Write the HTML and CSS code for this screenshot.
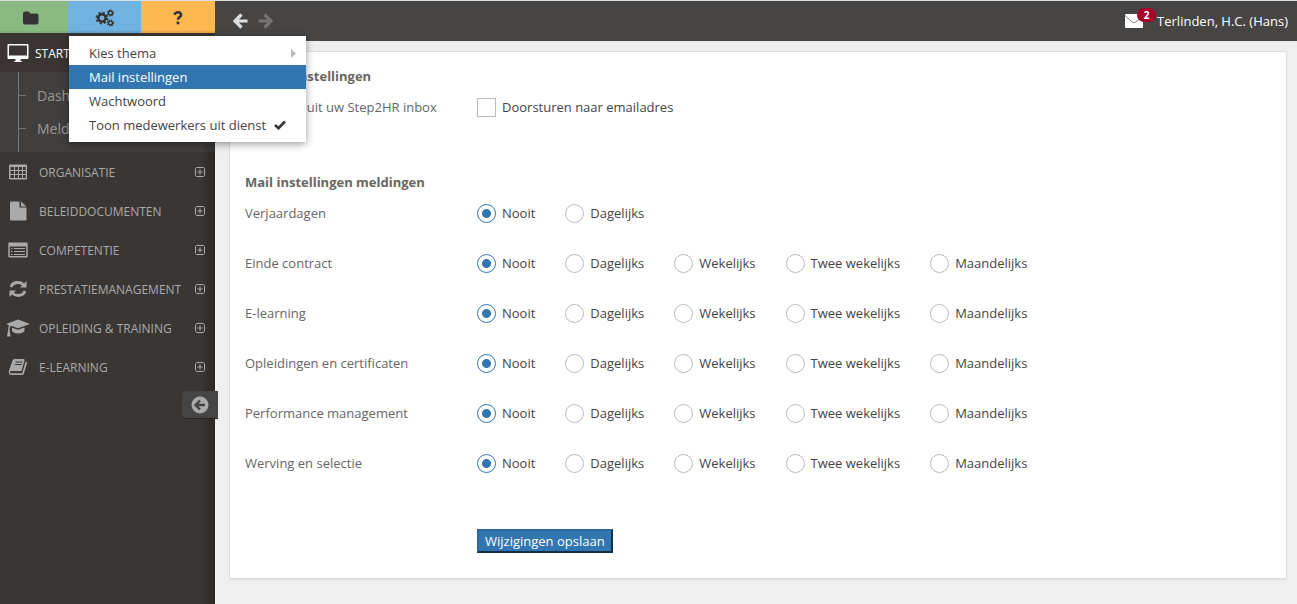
FILE: index.html
```html
<!DOCTYPE html>
<html lang="nl">
<head>
<meta charset="utf-8">
<title>Mail instellingen</title>
<link rel="stylesheet" href="styles.css">
</head>
<body>
<div class="app">
  <aside class="sidebar">
    <div class="quick">
      <button class="quick-btn green" aria-label="Map"><svg width="18" height="14" viewBox="0 0 18 14"><path d="M1 2.500Q1 .5 3 .5H6Q8 .5 8 2.500H14.500Q16.500 2.500 16.500 4.500V11.500Q16.500 13.500 14.500 13.500H3Q1 13.500 1 11.500Z"/></svg></button>
      <button class="quick-btn blue" aria-label="Instellingen"><svg width="20" height="18" viewBox="0 0 20 18"><g fill="none" stroke="#333"><circle cx="7" cy="9" r="3.700" stroke-width="2.600"/><circle cx="7" cy="9" r="5.500" stroke-width="1.800" stroke-dasharray="2.160 2.160"/><circle cx="15.500" cy="4" r="2" stroke-width="1.400"/><circle cx="15.500" cy="4" r="3" stroke-width="1.200" stroke-dasharray="1.180 1.180"/><circle cx="15.500" cy="14" r="2" stroke-width="1.400"/><circle cx="15.500" cy="14" r="3" stroke-width="1.200" stroke-dasharray="1.180 1.180"/></g></svg></button>
      <button class="quick-btn orange" aria-label="Help"><svg width="10" height="14" viewBox="0 0 10 14"><path d="M1.200 3.600Q2.700 1.300 5 1.300Q8 1.300 8 3.900Q8 5.300 6.500 6.200Q5 7 5 8.800" fill="none" stroke="#333" stroke-width="2.600"/><path d="M3.600 10.500H6.400V13.300H3.600Z"/></svg></button>
    </div>
    <nav>
      <a class="nav-item start" href="#"><svg class="nav-icon wide" viewBox="0 0 22 20"><path fill-rule="evenodd" d="M1.500 1H20.500Q21.500 1 21.500 2V15Q21.500 16 20.500 16H13.500V17.500L15 18.500V19H7V18.500L8.500 17.500V16H1.500Q.5 16 .5 15V2Q.5 1 1.500 1ZM2 2.500V12.500H20V2.500Z"/></svg><span>START</span></a>
      <ul class="sub">
        <li><a href="#">Dashboard</a></li>
        <li><a href="#">Meldingen</a></li>
      </ul>
      <a class="nav-item" href="#"><svg class="nav-icon" viewBox="0 0 20 20"><path fill-rule="evenodd" d="M2 2.500H18Q19 2.500 19 3.500V16.500Q19 17.500 18 17.500H2Q1 17.500 1 16.500V3.500Q1 2.500 2 2.500ZM2.500 5V8H6V5ZM7 5V8H10V5ZM11 5V8H14V5ZM15 5V8H17.700V5ZM2.500 9V12H6V9ZM7 9V12H10V9ZM11 9V12H14V9ZM15 9V12H17.700V9ZM2.500 13V16H6V13ZM7 13V16H10V13ZM11 13V16H14V13ZM15 13V16H17.700V13Z"/></svg><span>ORGANISATIE</span><svg class="plus" viewBox="0 0 10 10"><path d="M1.500.5H8.500L9.500 1.500V8.500L8.500 9.500H1.500L.5 8.500V1.500ZM5 2.500V7.500M2.500 5H7.500"/></svg></a>
      <a class="nav-item" href="#"><svg class="nav-icon" viewBox="0 0 20 20"><path d="M3 .5H11.500V6.500H18.500V18.500Q18.500 19.500 17.500 19.500H3Q2 19.500 2 18.500V1.500Q2 .5 3 .5ZM13 .5L18.500 5.500H13Z"/></svg><span>BELEIDDOCUMENTEN</span><svg class="plus" viewBox="0 0 10 10"><path d="M1.500.5H8.500L9.500 1.500V8.500L8.500 9.500H1.500L.5 8.500V1.500ZM5 2.500V7.500M2.500 5H7.500"/></svg></a>
      <a class="nav-item" href="#"><svg class="nav-icon" viewBox="0 0 20 20"><path fill-rule="evenodd" d="M1.500 2.500H18.500Q19.700 2.500 19.700 3.700V16.300Q19.700 17.500 18.500 17.500H1.500Q.3 17.500 .3 16.300V3.700Q.3 2.500 1.500 2.500ZM1.800 6.500V16H18.200V6.500Z"/><path d="M3 8.500H4.500M6 8.500H17M3 11.500H4.500M6 11.500H17M3 14.500H4.500M6 14.500H17" stroke="#aaa"/></svg><span>COMPETENTIE</span><svg class="plus" viewBox="0 0 10 10"><path d="M1.500.5H8.500L9.500 1.500V8.500L8.500 9.500H1.500L.5 8.500V1.500ZM5 2.500V7.500M2.500 5H7.500"/></svg></a>
      <a class="nav-item" href="#"><svg class="nav-icon" viewBox="0 0 20 20"><path fill="none" stroke="#aaa" stroke-width="2.800" d="M3 8Q4.500 3.500 10 3.500Q13.500 3.500 15.500 6M17 12Q15.500 16.500 10 16.500Q6.500 16.500 4.500 14"/><path d="M18.500 2V8.500H12ZM1.500 18V11.500H8Z"/></svg><span>PRESTATIEMANAGEMENT</span><svg class="plus" viewBox="0 0 10 10"><path d="M1.500.5H8.500L9.500 1.500V8.500L8.500 9.500H1.500L.5 8.500V1.500ZM5 2.500V7.500M2.500 5H7.500"/></svg></a>
      <a class="nav-item" href="#"><svg class="nav-icon wide" viewBox="0 0 24 20"><path d="M12 1.500L24 6L12 10.200L5 7.800Q3.500 9 3.500 11.500L4.500 18.500H1L2.200 11.500Q2.200 9 3 7.200L0 6ZM6 9.700L12 11.800L18.500 9.500V13Q16.500 15.500 12 15.500Q8 15.500 6 13Z"/></svg><span>OPLEIDING &amp; TRAINING</span><svg class="plus" viewBox="0 0 10 10"><path d="M1.500.5H8.500L9.500 1.500V8.500L8.500 9.500H1.500L.5 8.500V1.500ZM5 2.500V7.500M2.500 5H7.500"/></svg></a>
      <a class="nav-item" href="#"><svg class="nav-icon" viewBox="0 0 20 20"><path d="M6.500 2H15.500Q17 2 16.500 3.500L13.500 14H3Q2 14 2 15Q2 16.200 3.500 16.200H14.200L17.700 4.500Q19.300 5 19 6.500L15.700 17Q15.300 18 14 18H3.500Q1 18 .8 15.500Q.7 14.500 1.200 13L4.500 3.500Q5 2 6.500 2Z"/><path d="M7.500 5H14.500M6.800 7.500H13.800" stroke="#3a3532" fill="none"/></svg><span>E-LEARNING</span><svg class="plus" viewBox="0 0 10 10"><path d="M1.500.5H8.500L9.500 1.500V8.500L8.500 9.500H1.500L.5 8.500V1.500ZM5 2.500V7.500M2.500 5H7.500"/></svg></a>
    </nav>
    <button class="collapse" aria-label="Menu inklappen"><svg width="18" height="18" viewBox="0 0 18 18"><circle cx="9" cy="9" r="8.500" fill="#aaa"/><path d="M14 9H5M9 4.500L4.500 9L9 13.500" fill="none" stroke="#444" stroke-width="2.400"/></svg></button>

    <div class="menu" role="menu">
      <a role="menuitem" href="#">Kies thema<svg class="chevron" width="5" height="9" viewBox="0 0 5 9"><path fill="#bbb" d="M0 0L5 4.500L0 9Z"/></svg></a>
      <a role="menuitem" class="active" href="#">Mail instellingen</a>
      <a role="menuitem" href="#">Wachtwoord</a>
      <a role="menuitem" href="#">Toon medewerkers uit dienst<svg width="12" height="10" viewBox="0 0 12 10"><path d="M1 5L4.500 8.200L11 1.500" fill="none" stroke="#333" stroke-width="2.600"/></svg></a>
    </div>
  </aside>

  <div class="main">
    <header class="topbar">
      <button class="arrow" aria-label="Vorige"><svg width="15" height="16" viewBox="0 0 15 16"><path d="M14.500 8H3M8.500 1.500L2 8L8.500 14.500" fill="none" stroke="#ddd" stroke-width="3.200"/></svg></button>
      <button class="arrow" aria-label="Volgende"><svg width="15" height="16" viewBox="0 0 15 16"><path d="M.5 8H12M6.500 1.500L13 8L6.500 14.500" fill="none" stroke="#777573" stroke-width="3.200"/></svg></button>
      <a class="mail" href="#" aria-label="Berichten"><svg width="18" height="14" viewBox="0 0 18 14"><rect width="18" height="14" rx="1" fill="#fff"/><path d="M0 1.500L7 8Q9 9.500 11 8L18 1.500" fill="none" stroke="#8a8785"/></svg><span class="badge">2</span></a>
      <a class="user" href="#">Terlinden, H.C. (Hans)</a>
    </header>

    <main class="card">
      <form>
        <h2>E-mails instellingen</h2>
        <div class="row first"><span>Berichten uit uw Step2HR inbox</span>
          <div class="options"><label><input type="checkbox">Doorsturen naar emailadres</label></div></div>
        <h2>Mail instellingen meldingen</h2>
        <div class="row" role="radiogroup" aria-labelledby="l1"><span id="l1">Verjaardagen</span>
          <div class="options"><label><input type="radio" name="r1" checked>Nooit</label><label><input type="radio" name="r1">Dagelijks</label></div></div>
        <div class="row" role="radiogroup" aria-labelledby="l2"><span id="l2">Einde contract</span>
          <div class="options"><label><input type="radio" name="r2" checked>Nooit</label><label><input type="radio" name="r2">Dagelijks</label><label><input type="radio" name="r2">Wekelijks</label><label><input type="radio" name="r2">Twee wekelijks</label><label><input type="radio" name="r2">Maandelijks</label></div></div>
        <div class="row" role="radiogroup" aria-labelledby="l3"><span id="l3">E-learning</span>
          <div class="options"><label><input type="radio" name="r3" checked>Nooit</label><label><input type="radio" name="r3">Dagelijks</label><label><input type="radio" name="r3">Wekelijks</label><label><input type="radio" name="r3">Twee wekelijks</label><label><input type="radio" name="r3">Maandelijks</label></div></div>
        <div class="row" role="radiogroup" aria-labelledby="l4"><span id="l4">Opleidingen en certificaten</span>
          <div class="options"><label><input type="radio" name="r4" checked>Nooit</label><label><input type="radio" name="r4">Dagelijks</label><label><input type="radio" name="r4">Wekelijks</label><label><input type="radio" name="r4">Twee wekelijks</label><label><input type="radio" name="r4">Maandelijks</label></div></div>
        <div class="row" role="radiogroup" aria-labelledby="l5"><span id="l5">Performance management</span>
          <div class="options"><label><input type="radio" name="r5" checked>Nooit</label><label><input type="radio" name="r5">Dagelijks</label><label><input type="radio" name="r5">Wekelijks</label><label><input type="radio" name="r5">Twee wekelijks</label><label><input type="radio" name="r5">Maandelijks</label></div></div>
        <div class="row" role="radiogroup" aria-labelledby="l6"><span id="l6">Werving en selectie</span>
          <div class="options"><label><input type="radio" name="r6" checked>Nooit</label><label><input type="radio" name="r6">Dagelijks</label><label><input type="radio" name="r6">Wekelijks</label><label><input type="radio" name="r6">Twee wekelijks</label><label><input type="radio" name="r6">Maandelijks</label></div></div>
        <button class="save" type="button">Wijzigingen opslaan</button>
      </form>
    </main>
  </div>
</div>
</body>
</html>
```
FILE: styles.css
```css
* { box-sizing: border-box; }
body {
  margin: 0;
  font: 13px/20px "Open Sans", "Liberation Sans", sans-serif;
  color: #444;
  background: #efefef;
}
a { color: inherit; text-decoration: none; }
button { font: inherit; cursor: pointer; }
.app {
  display: flex;
  min-height: 100vh;
  border-top: 1px solid #ddd;
}

/* Sidebar */
.sidebar {
  position: relative;
  display: flex;
  flex-direction: column;
  flex: none;
  width: 215px;
  background: linear-gradient(to right, #3a3633 200px, #2b2724);
  color: #aaa;
}
.quick { display: flex; height: 32px; }
.quick-btn {
  display: flex;
  align-items: center;
  justify-content: center;
  width: 74px;
  padding: 4px 0 0;
  border: 0;
  border-bottom: 2px solid rgba(0, 0, 0, .06);
  fill: #333;
}
.green { width: 68px; padding-right: 6px; background: #8aba82; }
.blue { background: #70b2e0; }
.orange { background: #ffb752; }
.nav-item {
  display: flex;
  align-items: center;
  height: 39px;
  padding: 0 10px 0 8px;
  font-size: 12px;
  fill: #aaa;
}
.nav-item span { margin-left: 11px; padding-top: 2px; flex: 1; white-space: nowrap; }
.nav-icon { width: 20px; height: 20px; flex: none; }
.nav-icon.wide { width: 24px; margin: 0 -2px; }
.plus {
  width: 10px;
  height: 10px;
  flex: none;
  fill: none;
  stroke: #aaa;
}
.start { background: #3a3532; color: #fff; fill: #fff; }
.start span { margin-left: 7px; }
.sub {
  height: 80px;
  margin: 0;
  padding: 0 0 0 18px;
  list-style: none;
  background: linear-gradient(to right, #403f3d 200px, #353331);
  font-size: 14px;
  color: #999;
}
/* The tree line runs the full height of the list */
.sub::before {
  content: "";
  float: left;
  height: 100%;
  border-left: 1px solid #777;
}
.sub li {
  display: flex;
  align-items: center;
  height: 33px;
}
.sub li:first-child { height: 40px; padding-top: 7px; }
.sub li::before {
  content: "";
  width: 7px;
  margin-right: 11px;
  border-top: 1px solid #777;
}
.collapse {
  display: flex;
  align-items: center;
  justify-content: center;
  align-self: flex-end;
  width: 36px;
  height: 28px;
  margin: 5px -3px 0 0;
  padding: 0;
  border: 0;
  border-bottom: 1px solid #222;
  border-radius: 4px 0 0 4px;
  background: #444;
}

/* Settings menu */
.menu {
  position: absolute;
  z-index: 2;
  left: 69px;
  top: 35px;
  width: 237px;
  padding: 5px 0;
  background: #fff;
  box-shadow: 0 2px 8px rgba(0, 0, 0, .4);
  color: #444;
}
.menu a {
  display: flex;
  align-items: center;
  gap: 8px;
  height: 24px;
  padding: 0 10px 0 20px;
  white-space: nowrap;
}
.menu .active { background: #3276b1; color: #fff; }
.chevron { margin-left: auto; }

/* Main area */
.main { flex: 1; min-width: 0; }
.topbar {
  display: flex;
  align-items: center;
  height: 40px;
  padding: 0 9px 0 18px;
  background: #474543;
  color: #fff;
}
.arrow {
  display: flex;
  margin-right: 10px;
  padding: 0;
  border: 0;
  background: none;
}
.mail { position: relative; display: flex; margin: 0 14px 0 auto; }
.badge {
  position: absolute;
  left: 12px;
  top: -6px;
  width: 19px;
  height: 14px;
  border-radius: 7px;
  background: #a90329;
  font-size: 10px;
  font-weight: 700;
  line-height: 14px;
  text-align: center;
}
.card {
  margin: 10px 10px 25px 14px;
  padding: 14px 15px 16px;
  border: 1px solid #ddd;
  border-radius: 2px;
  background: #fff;
  box-shadow: 0 1px 1px #ddd;
}
h2 { margin: 0 0 11px; font-size: 13px; line-height: 20px; color: #666; }
.row {
  display: grid;
  grid-template-columns: 232px 1fr;
  align-items: center;
  height: 20px;
  margin-bottom: 30px;
  color: #666;
}
.first { margin-bottom: 55px; }
.options { display: flex; gap: 30px; color: #444; white-space: nowrap; }
.options label { display: flex; align-items: center; gap: 6px; }
input {
  appearance: none;
  width: 19px;
  height: 19px;
  margin: 0;
  border: 1px solid #bbb;
  background: #fff;
}
input[type="radio"] { border-radius: 50%; }
input[type="radio"]:checked {
  border-color: #3276b1;
  background: radial-gradient(circle, #3276b1 4px, #fff 5px);
}
.save {
  display: block;
  height: 24px;
  margin: 56px 0 9px 232px;
  padding: 0 6px;
  border: 2px outset #2c699d;
  background: #3276b1;
  color: #fff;
  line-height: 20px;
}
```
